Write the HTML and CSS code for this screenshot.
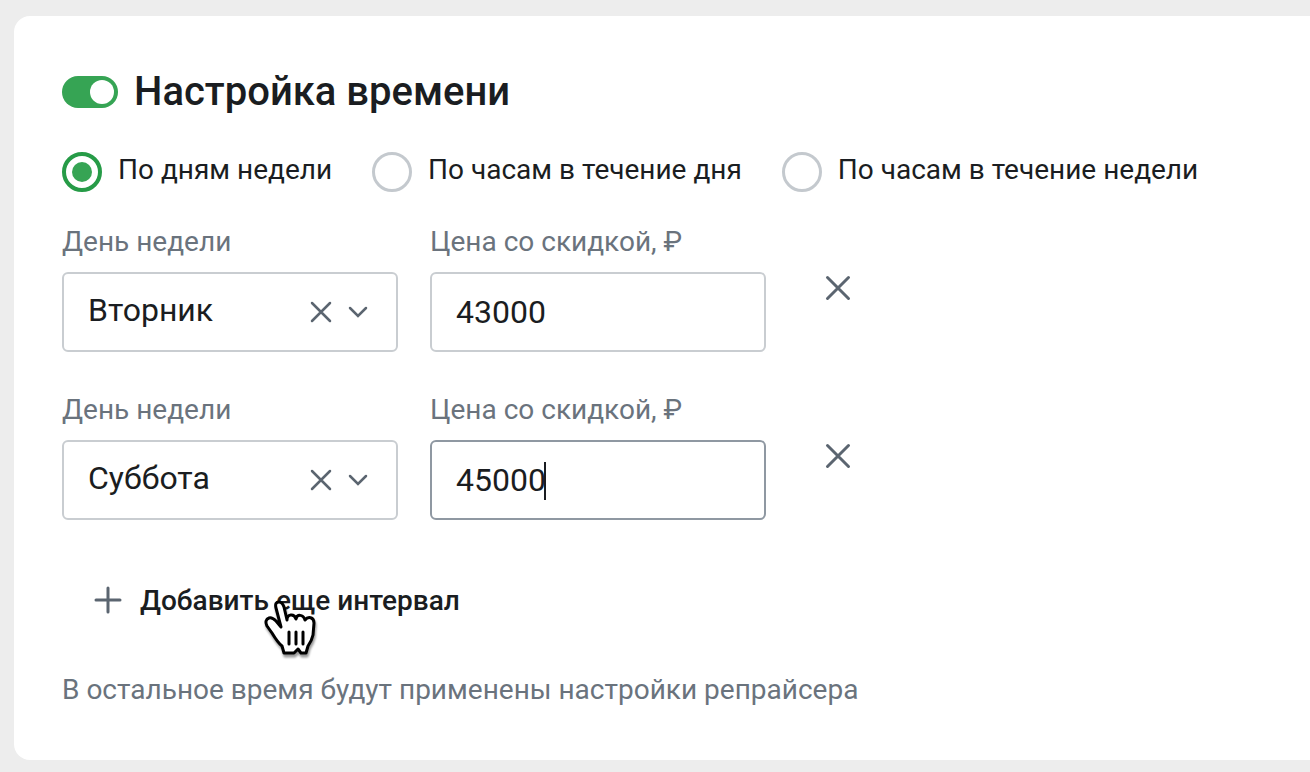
FILE: index.html
```html
<!DOCTYPE html>
<html lang="ru">
<head>
    <meta charset="UTF-8">
    <meta name="viewport" content="width=device-width, initial-scale=1.0">
    <title>Настройка времени</title>
    <link rel="stylesheet" href="styles.css">
</head>
<body>

    <form class="card">
        <!-- Title with toggle -->
        <div class="card-header">
            <input type="checkbox" class="switch" id="time-enabled" checked>
            <h1><label for="time-enabled">Настройка времени</label></h1>
        </div>

        <!-- Schedule mode -->
        <div class="modes">
            <label class="mode"><input type="radio" name="mode" value="weekday" checked>По дням недели</label>
            <label class="mode"><input type="radio" name="mode" value="day-hours">По часам в течение дня</label>
            <label class="mode"><input type="radio" name="mode" value="week-hours">По часам в течение недели</label>
        </div>

        <!-- Intervals -->
        <div class="intervals">
            <div class="interval">
                <div class="field">
                    <label for="day-1">День недели</label>
                    <div class="control">
                        <select id="day-1">
                            <option>Понедельник</option>
                            <option selected>Вторник</option>
                            <option>Суббота</option>
                        </select>
                        <div class="select-icons">
                            <button type="button" class="clear" aria-label="Очистить">
                                <svg width="22" height="22" viewBox="0 0 22 22"><path d="M2 2l18 18M20 2L2 20"/></svg>
                            </button>
                            <svg class="arrow" width="20" height="22" viewBox="0 0 20 22"><path d="M2 7l8 8 8-8"/></svg>
                        </div>
                    </div>
                </div>
                <div class="field">
                    <label for="price-1">Цена со скидкой, ₽</label>
                    <div class="control">
                        <input type="text" id="price-1" inputmode="numeric" value="43000">
                    </div>
                </div>
                <button type="button" class="remove" aria-label="Удалить интервал">
                    <svg width="26" height="26" viewBox="0 0 26 26"><path d="M2.5 2.5l21 21M23.5 2.5l-21 21"/></svg>
                </button>
            </div>

            <div class="interval">
                <div class="field">
                    <label for="day-2">День недели</label>
                    <div class="control">
                        <select id="day-2">
                            <option>Понедельник</option>
                            <option>Вторник</option>
                            <option selected>Суббота</option>
                        </select>
                        <div class="select-icons">
                            <button type="button" class="clear" aria-label="Очистить">
                                <svg width="22" height="22" viewBox="0 0 22 22"><path d="M2 2l18 18M20 2L2 20"/></svg>
                            </button>
                            <svg class="arrow" width="20" height="22" viewBox="0 0 20 22"><path d="M2 7l8 8 8-8"/></svg>
                        </div>
                    </div>
                </div>
                <div class="field">
                    <label for="price-2">Цена со скидкой, ₽</label>
                    <div class="control">
                        <input type="text" id="price-2" class="active" inputmode="numeric" value="45000">
                        <span class="caret"></span>
                    </div>
                </div>
                <button type="button" class="remove" aria-label="Удалить интервал">
                    <svg width="26" height="26" viewBox="0 0 26 26"><path d="M2.5 2.5l21 21M23.5 2.5l-21 21"/></svg>
                </button>
            </div>
        </div>

        <button type="button" class="add">
            <svg width="28" height="28" viewBox="0 0 28 28"><path d="M14 2v24M2 14h24"/></svg>
            Добавить еще интервал
            <svg class="pointer" width="54" height="60" viewBox="0 0 54 60">
                <path class="hand" d="M20 53L18 46C14 43 11 38 8 33L3 26C1 22 2 19 5 18C8 17 10 19 12 21L17 27L12 8C11 4 12 2 15 2C18 2 19 4 20 7L23 20C23 14 30 13 32 19C33 14 39 14 41 20C44 16 50 17 50 23L49 35C48 40 46 43 44 46L42 53H37L34 49L30 53H20Z"/>
                <path class="lines" d="M25 32V44M32 32V44M39 32V44"/>
            </svg>
        </button>

        <p class="note">В остальное время будут применены настройки репрайсера</p>
    </form>

</body>
</html>
```
FILE: styles.css
```css
* {
    box-sizing: border-box;
}

body {
    font-family: Roboto, "Liberation Sans", sans-serif;
    font-size: 28px;
    line-height: 36px;
    background-color: #ededed;
    color: #1a1d21;
    margin: 0;
    padding: 16px 0 12px 14px;
}

.card {
    padding: 48px 48px 52px;
    background-color: white;
    border-radius: 16px 0 0 16px;
}

button {
    background: none;
    border: none;
    padding: 0;
    cursor: pointer;
}

svg {
    display: block;
    fill: none;
    stroke: #5b6570;
    stroke-width: 2.5;
    stroke-linecap: round;
}

.card-header {
    display: flex;
    align-items: center;
    gap: 16px;
    margin-bottom: 32px;
}

h1 {
    font-size: 40px;
    line-height: 56px;
    font-weight: 500;
    margin: 0;
}

.switch {
    appearance: none;
    width: 56px;
    height: 32px;
    margin: 0;
    padding: 4px;
    border-radius: 16px;
    background-color: #36a454;
    display: flex;
    justify-content: flex-end;
}

.switch::before {
    content: "";
    width: 24px;
    height: 24px;
    border-radius: 50%;
    background-color: white;
}

.switch:not(:checked) {
    background-color: #c4c9ce;
    justify-content: flex-start;
}

.modes {
    display: flex;
    flex-wrap: wrap;
    gap: 40px;
    margin-bottom: 32px;
}

.mode {
    display: flex;
    gap: 16px;
}

.mode input {
    appearance: none;
    width: 40px;
    height: 40px;
    margin: 0;
    border: 3px solid #c4c9ce;
    border-radius: 50%;
    display: grid;
    place-items: center;
}

.mode input:checked {
    border-width: 4px;
    border-color: #269b47;
}

.mode input:checked::before {
    content: "";
    width: 20px;
    height: 20px;
    border-radius: 50%;
    background-color: #36a454;
}

.intervals {
    display: flex;
    flex-direction: column;
    gap: 40px;
}

.interval {
    display: flex;
    align-items: flex-start;
    gap: 32px;
}

.field {
    flex: 0 1 336px;
}

.field label {
    display: block;
    color: #6a737d;
    margin-bottom: 12px;
}

.control {
    position: relative;
}

select, input[type="text"] {
    appearance: none;
    display: block;
    width: 100%;
    height: 80px;
    padding: 0 24px;
    border: 2px solid #c9cdd1;
    border-radius: 6px;
    background-color: white;
    color: inherit;
    font-family: inherit;
    font-size: 32px;
    outline: none;
}

input[type="text"].active {
    border-color: #8f98a2;
}

select {
    padding-bottom: 4px;
}

.select-icons {
    position: absolute;
    top: 0;
    bottom: 0;
    right: 30px;
    display: flex;
    align-items: center;
    gap: 16px;
    pointer-events: none;
}

.clear {
    pointer-events: auto;
}

.caret {
    position: absolute;
    top: 22px;
    left: 114px;
    width: 2px;
    height: 38px;
    background-color: #1a1d21;
}

.remove {
    width: 80px;
    height: 80px;
    margin-top: 24px;
    display: grid;
    place-items: center;
}

.remove svg {
    stroke-width: 3;
}

.add {
    position: relative;
    display: flex;
    align-items: center;
    gap: 18px;
    height: 64px;
    margin: 48px 0 40px;
    padding: 0 32px;
    color: inherit;
    font-family: inherit;
    font-size: 28px;
    font-weight: 500;
}

.add svg {
    stroke-width: 3;
}

.add .pointer {
    position: absolute;
    left: 202px;
    top: 32px;
    filter: drop-shadow(1px 3px 1px rgba(0, 0, 0, 0.4));
}

.pointer .hand {
    fill: white;
    stroke: black;
    stroke-linejoin: round;
}

.pointer .lines {
    stroke: black;
}

.note {
    margin: 0;
    color: #6a737d;
}
```
